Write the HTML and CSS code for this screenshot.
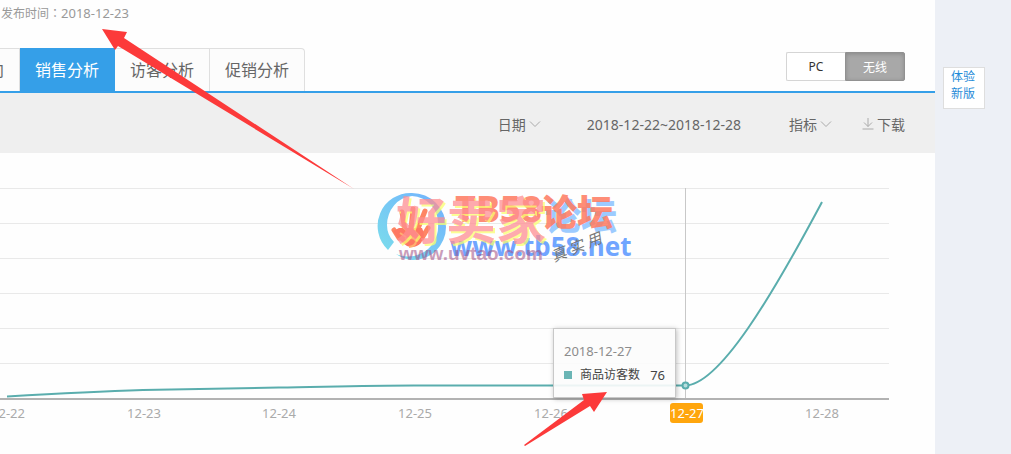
FILE: index.html
```
<!DOCTYPE html>
<html lang="zh-CN">
<head>
  <meta charset="UTF-8">
  <meta name="viewport" content="width=device-width, initial-scale=1">
  <title>销售分析</title>
  <link rel="stylesheet" href="styles.css">
</head>
<body>
<div class="page">
  <main class="main">
    <p class="publish">发布时间<span class="colon" lang="zh-TW">：</span><time class="num">2018-12-23</time></p>

    <!-- Tabs and device switch -->
    <div class="tabbar">
      <nav class="tabs">
        <a class="tab" href="#">向</a>
        <a class="tab active" href="#">销售分析</a>
        <a class="tab" href="#">访客分析</a>
        <a class="tab last" href="#">促销分析</a>
      </nav>
      <div class="switch">
        <button type="button">PC</button>
        <button type="button" class="on">无线</button>
      </div>
    </div>

    <!-- Filters -->
    <div class="filters">
      <button type="button" class="filter" aria-haspopup="true">日期
        <svg class="icon" width="12" height="12" viewBox="0 0 12 12"><path d="M1 3.500L6 8.500L11 3.500"/></svg>
      </button>
      <span class="range">2018-12-22~2018-12-28</span>
      <button type="button" class="filter metric" aria-haspopup="true">指标
        <svg class="icon" width="12" height="12" viewBox="0 0 12 12"><path d="M1 3.500L6 8.500L11 3.500"/></svg>
      </button>
      <button type="button" class="filter">
        <svg class="icon" width="12" height="12" viewBox="0 0 12 12"><path d="M6 0V8.500M2 4.500L6 8.500L10 4.500M0.500 11H11.500"/></svg>
        下载
      </button>
    </div>

    <!-- Visitors chart -->
    <div class="chart">
      <svg class="plot" viewBox="0 0 935 301">
        <path class="grid" d="M0 35.500H889M0 70.500H889M0 105.500H889M0 140.500H889M0 175.500H889M0 210.500H889"/>
        <path class="cursor" d="M685.500 35V245"/>
        <path class="axis" d="M0 246H889"/>
        <path class="line" d="M7 243.500C50 241 95 238.500 143 237C190 235.800 235 235 279 234.500C320 234 360 232.500 414 232.500H685C719 232.500 772 143 822 49"/>
        <circle class="dot" cx="685.500" cy="232.500" r="3"/>
        <rect class="mark" x="670" y="250" width="33" height="20" rx="3"/>
        <g class="ticks">
          <text x="8" y="265">12-22</text>
          <text x="144" y="265">12-23</text>
          <text x="279" y="265">12-24</text>
          <text x="415" y="265">12-25</text>
          <text x="551" y="265">12-26</text>
          <text class="current" x="687" y="265">12-27</text>
          <text x="822" y="265">12-28</text>
        </g>
      </svg>
      <div class="tooltip">
        <div class="tip-date num">2018-12-27</div>
        <div class="tip-row"><i class="swatch"></i>商品访客数<span class="tip-value num">76</span></div>
      </div>
    </div>

    <!-- Watermark and arrows over the page -->
    <svg class="overlay" viewBox="0 0 935 454">
      <defs>
        <linearGradient id="ring" x1="0" y1="1" x2="1" y2="0">
          <stop offset="0" stop-color="#7be0ea"/>
          <stop offset="1" stop-color="#72b0ff"/>
        </linearGradient>
      </defs>
      <path fill="url(#ring)" d="M388 250A33 33 0 0 1 412 193A34 34 0 0 1 446 227A33 33 0 0 1 412 260Q403 259 396 254Q408 259 420 254A30 30 0 0 0 438 224A27 27 0 0 0 412 196A27 29 0 0 0 387 225Q387 235 394 242Z"/>
      <g class="hand">
        <path d="M399 238L394 230M405 231L402 212M411 229L413 209M417 231L425 211M422 238L428 228"/>
        <path class="hand-palm" d="M399 228H422Q426 236 421 243Q415 249 407 246Q399 241 393 231Z"/>
      </g>
      <path class="palm" d="M405 239Q414 236 416 241Q416 246 409 247M400 233L406 237"/>
      <text class="wm-forum blue" x="545" y="230">论坛</text>
      <text class="wm-forum" x="455" y="222">TB58</text>
      <text class="wm-forum" x="541" y="226">论坛</text>
      <text class="wm-net" x="450" y="256">www.tb58.net</text>
      <g class="wm-seller">
        <text class="yellow" x="398" y="241">好卖家</text>
        <text x="396" y="239">好卖家</text>
      </g>
      <text class="wm-url" x="399" y="260">www.uvtao.com</text>
      <text class="wm-script" x="554" y="262" transform="rotate(-22 554 262)">真 实 用</text>
      <path class="arrow" d="M102 29L127 32L124 38L354 189L118 46L115 50Z"/>
      <path class="arrow" d="M607 392L594 412L590 406L525 446L524 445L584 400L582 394Z"/>
    </svg>
  </main>

  <aside class="side">
    <a class="try" href="#">体验新版</a>
  </aside>
</div>
</body>
</html>
```
FILE: styles.css
```
:root {
  --blue: #359fe8;
  --teal: #5aadad;
  --border: #dfdfdf;
  --text: #666;
  --font-stack: "Noto Sans", "Noto Sans CJK SC", sans-serif;
}
* {box-sizing: border-box; margin: 0; padding: 0;}
body {
  font-family: var(--font-stack);
  font-size: 12px;
  color: var(--text);
  background: #fff;
}
a {text-decoration: none; color: inherit;}
button {font: inherit; color: inherit; border: 0; background: none; cursor: pointer;}
.page {display: flex; min-height: 100vh; overflow: hidden;}
.main {position: relative; flex: 1; min-width: 0; background: #fefefe;}
.num {font-size: 13px;}

.publish {height: 48px; padding-left: 1px; line-height: 26px; color: #999;}
.colon {font-family: "Noto Sans CJK TC", sans-serif;}

/* Tabs */
.tabbar {
  display: flex;
  justify-content: space-between;
  padding-right: 30px;
  border-bottom: 2px solid var(--blue);
}
.tabs {display: flex; margin-left: -27px;}
.tab {
  height: 43px;
  padding: 0 15px;
  border: 1px solid var(--border);
  border-width: 1px 1px 0 0;
  font-size: 16px;
  line-height: 43px;
  background: #fcfcfc;
}
.tab.active {background: var(--blue); border-color: var(--blue); color: #fff;}
.tab.last {border-radius: 0 4px 0 0;}

/* PC / wireless switch */
.switch {display: flex; margin-top: 4px; height: 29px;}
.switch button {
  width: 59px;
  border: 1px solid #d5d5d5;
  border-right: 0;
  border-radius: 2px 0 0 2px;
  background: #fff;
  color: #333;
}
.switch .on {
  width: 60px;
  border: 1px solid #919191;
  border-radius: 0 2px 2px 0;
  background: #a8a8a8;
  color: #fff;
  box-shadow: inset 0 1px 4px #888;
}

/* Filters */
.filters {
  display: flex;
  align-items: center;
  justify-content: flex-end;
  height: 60px;
  padding: 2px 30px 0 0;
  background: #efefef;
  font-size: 14px;
}
.filter {display: flex; align-items: center; gap: 3px;}
.icon {fill: none; stroke: #aaa;}
.range {margin: 0 48px 0 46px;}
.metric {margin-right: 30px;}

/* Chart */
.chart {position: relative;}
.plot {display: block; width: 100%;}
.grid {stroke: #e9e9e9;}
.cursor {stroke: #c8c8c8;}
.axis {stroke: #b2b2b2; stroke-width: 2;}
.line {fill: none; stroke: var(--teal); stroke-width: 2;}
.dot {fill: #b8dede; stroke: var(--teal); stroke-width: 2;}
.mark {fill: #ffa60d;}
.ticks {font-size: 13px; text-anchor: middle; fill: #aaa;}
.ticks .current {fill: #fff;}

.tooltip {
  position: absolute;
  top: 175px;
  right: 259px;
  width: 123px;
  padding: 10px;
  border: 1px solid #c8c8c8;
  background: rgba(252, 252, 252, .9);
  box-shadow: 1px 1px 5px rgba(0, 0, 0, .25);
  line-height: 24px;
  white-space: nowrap;
}
.tip-date {color: #8c8c8c;}
.tip-row {display: flex; align-items: center; color: #444;}
.swatch {width: 8px; height: 8px; margin-right: 8px; background: #6bb5b5;}
.tip-value {margin-left: auto;}

/* Watermark and arrows */
.overlay {position: absolute; top: 0; left: 0; width: 100%; pointer-events: none;}
.arrow {fill: #fc3a3a;}
.hand {fill: none; stroke: #ff7048; stroke-width: 5; stroke-linecap: round; opacity: .85;}
.hand-palm {fill: #ff6048; stroke: none;}
.palm {fill: none; stroke: #ffb070; stroke-width: 2;}
.wm-forum {font-size: 36px; font-weight: 800; fill: #ff7a60; opacity: .85;}
.wm-forum.blue {fill: #9ccbff; opacity: 1;}
.wm-net {font-size: 26px; font-weight: 700; fill: #70a5ff;}
.wm-seller {font-size: 50px; font-weight: 700; fill: #ff8f92; opacity: .75;}
.wm-seller .yellow {fill: #faff70;}
.wm-url {font: 700 19px "Liberation Sans", sans-serif; fill: #a14f83; opacity: .55;}
.wm-script {font-size: 15px; fill: #777; font-style: italic;}

/* Side strip */
.side {width: 76px; padding: 67px 26px 0 8px; background: #edf0f6;}
.try {
  display: block;
  height: 42px;
  padding: 0 7px;
  border: 1px solid #dedede;
  background: #fff;
  color: #1f8bd8;
  line-height: 17px;
}
```
